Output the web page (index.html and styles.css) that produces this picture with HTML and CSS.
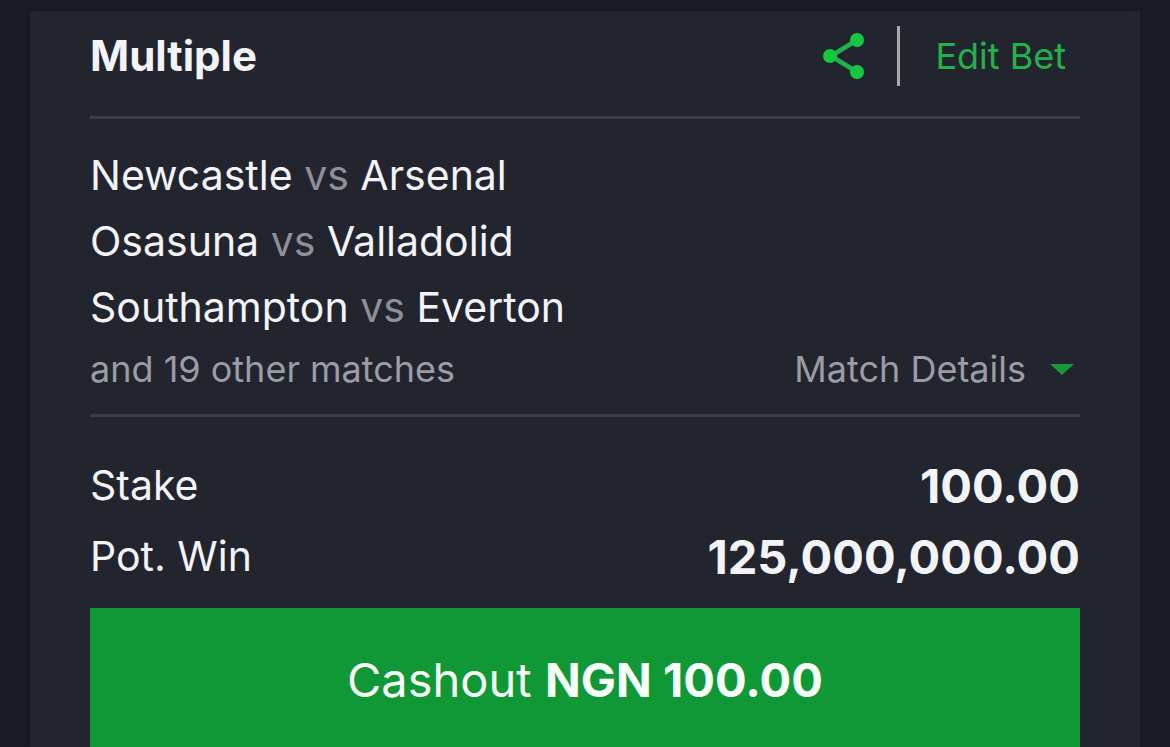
FILE: index.html
```html
<!DOCTYPE html>
<html lang="en">
<head>
    <meta charset="UTF-8">
    <meta name="viewport" content="width=device-width, initial-scale=1">
    <title>Multiple</title>
    <link rel="stylesheet" href="styles.css">
</head>
<body>
<main class="bet">
    <header class="bet-head">
        <h1 class="title">Multiple</h1>
        <div class="actions">
            <button class="share" type="button" aria-label="Share">
                <svg width="42" height="46" viewBox="0 0 42 46">
                    <path d="M34 7L8 23L34 39" fill="none" stroke="#22b24c" stroke-width="4.5"/>
                    <circle cx="34" cy="7" r="7"/>
                    <circle cx="7" cy="23" r="7"/>
                    <circle cx="34" cy="39" r="7"/>
                </svg>
            </button>
            <button class="edit" type="button">Edit Bet</button>
        </div>
    </header>

    <section class="matches">
        <ul class="match-list">
            <li>Newcastle <span class="vs">vs</span> Arsenal</li>
            <li>Osasuna <span class="vs">vs</span> Valladolid</li>
            <li>Southampton <span class="vs">vs</span> Everton</li>
        </ul>
        <div class="more">
            <span>and 19 other matches</span>
            <button class="details" type="button">Match Details <i class="arrow"></i></button>
        </div>
    </section>

    <dl class="sums">
        <div class="sum">
            <dt>Stake</dt>
            <dd>100.00</dd>
        </div>
        <div class="sum">
            <dt>Pot. Win</dt>
            <dd>125,000,000.00</dd>
        </div>
    </dl>

    <button class="cashout" type="button">Cashout <b>NGN 100.00</b></button>
</main>
</body>
</html>
```
FILE: styles.css
```css
body, h1, ul, dl, dd {
    margin: 0;
    padding: 0;
}

html {
    scrollbar-width: none;
}

body {
    padding: 11px 30px 0;
    background: #1b1d26;
    color: #f3f3fa;
    font-family: Inter, "Liberation Sans", sans-serif;
    font-size: 41px;
}

button {
    padding: 0;
    border: 0;
    background: none;
    color: inherit;
    font: inherit;
    cursor: pointer;
}

.bet {
    padding: 0 60px;
    background: #23252e;
    box-shadow: 0 0 10px #15171e;
}

.bet-head {
    display: flex;
    justify-content: space-between;
    align-items: center;
    padding: 15px 0 30px;
    border-bottom: 3px solid #3a3c45;
}

.title {
    font-size: 42px;
    font-weight: 700;
    line-height: 60px;
}

.actions {
    display: flex;
    align-items: center;
}

.share {
    display: flex;
    margin-right: 32px;
    fill: #14c840;
}

.edit {
    padding: 0 14px 0 35px;
    border-left: 3px solid #a9a9b0;
    color: #22b24c;
    font-size: 36px;
    line-height: 60px;
}

.matches {
    padding: 23px 0 16px;
    border-bottom: 3px solid #3a3c45;
}

.match-list {
    list-style: none;
    line-height: 66px;
}

.vs {
    color: #8e9099;
}

.more {
    display: flex;
    justify-content: space-between;
    color: #9a9ca6;
    font-size: 36px;
    line-height: 58px;
}

.details {
    display: flex;
    align-items: center;
    gap: 24px;
    padding-right: 6px;
}

.arrow {
    border: 12px solid transparent;
    border-top: 11px solid #15983a;
    border-bottom: 0;
}

.sums {
    padding: 33px 0 16px;
}

.sum {
    display: flex;
    justify-content: space-between;
    line-height: 71px;
}

.sum dd {
    font-size: 47px;
    font-weight: 700;
}

.cashout {
    display: block;
    width: 100%;
    background: #109837;
    color: #f6fff8;
    font-size: 47px;
    line-height: 144px;
}

.cashout b {
    font-weight: 700;
}
```
